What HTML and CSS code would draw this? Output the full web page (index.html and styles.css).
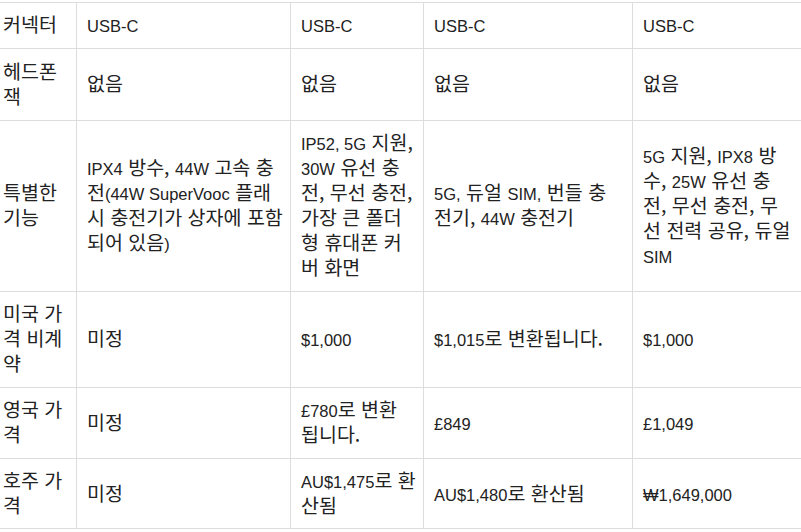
FILE: index.html
```html
<!DOCTYPE html>
<html lang="ko">
<head>
<meta charset="utf-8">
<title>사양 비교</title>
<link rel="stylesheet" href="styles.css">
</head>
<body>
<table class="spec">
  <colgroup>
    <col class="c1"><col class="c2"><col class="c3"><col class="c4"><col class="c5">
  </colgroup>
  <tbody>
    <tr>
      <td>커넥터</td>
      <td><span class="lat">USB-C</span></td>
      <td><span class="lat">USB-C</span></td>
      <td><span class="lat">USB-C</span></td>
      <td><span class="lat">USB-C</span></td>
    </tr>
    <tr class="row-tall">
      <td>헤드폰<br>잭</td>
      <td>없음</td>
      <td>없음</td>
      <td>없음</td>
      <td>없음</td>
    </tr>
    <tr>
      <td>특별한<br>기능</td>
      <td><span class="lat">IPX4</span> 방수, <span class="lat">44W</span> 고속 충<br>전<span class="lat">(44W SuperVooc</span> 플래<br>시 충전기가 상자에 포함<br>되어 있음<span class="lat">)</span></td>
      <td><span class="lat">IP52, 5G</span> 지원,<br><span class="lat">30W</span> 유선 충<br>전, 무선 충전,<br>가장 큰 폴더<br>형 휴대폰 커<br>버 화면</td>
      <td><span class="lat">5G,</span> 듀얼 <span class="lat">SIM,</span> 번들 충<br>전기, <span class="lat">44W</span> 충전기</td>
      <td><span class="lat">5G</span> 지원, <span class="lat">IPX8</span> 방<br>수, <span class="lat">25W</span> 유선 충<br>전, 무선 충전, 무<br>선 전력 공유, 듀얼<br><span class="lat">SIM</span></td>
    </tr>
    <tr>
      <td>미국 가<br>격 비계<br>약</td>
      <td>미정</td>
      <td><span class="lat">$1,000</span></td>
      <td><span class="lat">$1,015</span>로 변환됩니다.</td>
      <td><span class="lat">$1,000</span></td>
    </tr>
    <tr>
      <td>영국 가<br>격</td>
      <td>미정</td>
      <td><span class="lat">£780</span>로 변환<br>됩니다.</td>
      <td><span class="lat">£849</span></td>
      <td><span class="lat">£1,049</span></td>
    </tr>
    <tr class="row-short">
      <td>호주 가<br>격</td>
      <td>미정</td>
      <td><span class="lat">AU$1,475</span>로 환<br>산됨</td>
      <td><span class="lat">AU$1,480</span>로 환산됨</td>
      <td><span class="lat">₩1,649,000</span></td>
    </tr>
  </tbody>
</table>
</body>
</html>
```
FILE: styles.css
```css
html, body {
  margin: 0;
  padding: 0;
  background: #ffffff;
}

.spec {
  margin: 2px 0 0 -8px;
  border-collapse: separate;
  border-spacing: 0;
  table-layout: fixed;
  width: 810px;
  border-top: 1px solid #dddddd;
  border-left: 1px solid #dddddd;
  font-family: "Noto Sans CJK KR", "Liberation Sans", sans-serif;
  font-size: 19.5px;
  line-height: 25px;
  color: #222222;
}

.c1 { width: 84px; }
.c2 { width: 214px; }
.c3 { width: 133px; }
.c4 { width: 209px; }
.c5 { width: 169px; }

.spec td {
  box-sizing: border-box;
  padding: 8px 10px 12px 10px;
  border-right: 1px solid #dddddd;
  border-bottom: 1px solid #dddddd;
  vertical-align: middle;
  text-align: left;
  white-space: nowrap;
  overflow: hidden;
}

.row-tall td {
  height: 72px;
}

.row-short td {
  padding-bottom: 11px;
}

.lat {
  font-family: "Liberation Sans", Arial, sans-serif;
  font-size: 16.5px;
  line-height: 1;
}
```
